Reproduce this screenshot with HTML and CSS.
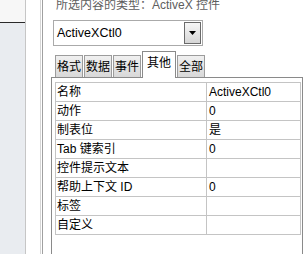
FILE: index.html
```html
<!DOCTYPE html>
<html lang="zh-CN">
<head>
    <meta charset="UTF-8">
    <meta name="viewport" content="width=device-width, initial-scale=1.0">
    <title>属性表</title>
    <link rel="stylesheet" href="styles.css">
</head>
<body>
    <div id="nav-pane">
        <div class="nav-head"></div>
        <div class="nav-body"></div>
    </div>
    <div class="splitter"></div>
    <div id="property-sheet">
        <div class="sel-type">所选内容的类型：ActiveX 控件</div>
        <div class="combo">
            <span class="combo-text">ActiveXCtl0</span>
            <span class="combo-btn">
                <svg width="7" height="4" viewBox="0 0 7 4"><path d="M0 0h7L3.5 4z" fill="#000"/></svg>
            </span>
        </div>
        <div class="tabs">
            <div class="tab">格式</div>
            <div class="tab">数据</div>
            <div class="tab">事件</div>
            <div class="tab active">其他</div>
            <div class="tab">全部</div>
        </div>
        <div class="tab-panel">
            <table class="props">
                <tr><td class="name">名称</td><td>ActiveXCtl0</td></tr>
                <tr><td class="name">动作</td><td>0</td></tr>
                <tr><td class="name">制表位</td><td>是</td></tr>
                <tr><td class="name">Tab 键索引</td><td>0</td></tr>
                <tr><td class="name">控件提示文本</td><td></td></tr>
                <tr><td class="name">帮助上下文 ID</td><td>0</td></tr>
                <tr><td class="name">标签</td><td></td></tr>
                <tr><td class="name">自定义</td><td></td></tr>
            </table>
        </div>
    </div>
</body>
</html>
```

FILE: styles.css
```css
body, html {
    margin: 0;
    height: 100%;
}

body {
    display: flex;
    height: 254px;
    overflow: hidden;
    background-color: #fff;
    color: #000;
    font-family: "Liberation Sans", "Noto Sans CJK SC", sans-serif;
    font-size: 12px;
}

#nav-pane {
    width: 25px;
    display: flex;
    flex-direction: column;
    border-right: 1px solid #c6c6c6;
}

.nav-head {
    height: 22px;
    background-color: #f7f7f7;
    border-bottom: 1px solid #2a2a2a;
}

.nav-body {
    flex: 1;
    background-color: #e9ecf0;
}

.splitter {
    margin-left: 14px;
    width: 1px;
    border-left: 1px solid #d6d6d6;
    border-right: 1px solid #a0a0a0;
}

#property-sheet {
    flex: 1;
    display: flex;
    flex-direction: column;
    padding: 0 1px 0 8px;
}

.sel-type {
    margin: -2px 0 0 5px;
    height: 14px;
    line-height: 14px;
    color: #5e5e5e;
    white-space: nowrap;
}

.combo {
    margin: 8px 0 0 2px;
    width: 148px;
    height: 24px;
    border: 1px solid #aaa;
    display: flex;
    align-items: center;
}

.combo-text {
    padding-left: 3px;
    font-size: 12.5px;
}

.combo-btn {
    margin-left: auto;
    margin-right: 1px;
    width: 15px;
    height: 20px;
    border: 1px solid #6a6a6a;
    background: linear-gradient(#f6f6f6, #d6d6d6);
    display: flex;
    align-items: center;
    justify-content: center;
}

.tabs {
    display: flex;
    align-items: flex-end;
    gap: 1px;
    margin: 5px 0 0 4px;
    position: relative;
    z-index: 1;
}

.tab {
    height: 21px;
    line-height: 22px;
    padding: 0 1px;
    border: 1px solid #9c9c9c;
    border-bottom: none;
    background: linear-gradient(#f0f0f0, #d8d8d8);
}

.tab.active {
    height: 26px;
    line-height: 22px;
    padding: 0 4px;
    margin-bottom: -1px;
    border-color: #8a8a8a;
    background: #fff;
}

.tab-panel {
    flex: 1;
    border: 1px solid #8a8a8a;
    border-bottom: none;
    padding: 4px 1px 0 3px;
}

.props {
    width: 246px;
    border-collapse: collapse;
}

.props td {
    height: 18px;
    padding: 0 2px;
    border: 1px solid #c4c4c4;
    line-height: 18px;
    white-space: nowrap;
}

.props td.name {
    width: 147px;
    padding-left: 1px;
}
```
